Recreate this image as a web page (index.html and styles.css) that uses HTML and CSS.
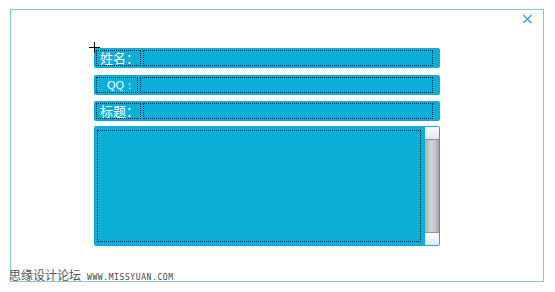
FILE: index.html
```html
<!DOCTYPE html>
<html>
<head>
<meta charset="utf-8">
<link rel="stylesheet" href="styles.css">
</head>
<body>
<div class="frame">
  <span class="close">×</span>
  <form class="form">
    <div class="row r1">
      <span class="label l1">姓名：</span>
      <span class="input"></span>
    </div>
    <div class="row r2">
      <span class="label l2">QQ：</span>
      <span class="input"></span>
    </div>
    <div class="row r3">
      <span class="label l1">标题：</span>
      <span class="input"></span>
    </div>
    <div class="area">
      <div class="area-inner"></div>
      <div class="scroll">
        <div class="sb-btn"></div>
        <div class="sb-thumb"></div>
        <div class="sb-btn"></div>
      </div>
    </div>
  </form>
  <svg class="cursor" width="11" height="11" viewBox="0 0 11 11"><path d="M5.5 0V11M0 5.5H11" stroke="#000" stroke-width="1"/></svg>
</div>
<div class="footer"><span class="cn">思缘设计论坛</span><span class="url">WWW.MISSYUAN.COM</span></div>
</body>
</html>
```
FILE: styles.css
```css
html, body { margin: 0; padding: 0; background: #fff; }
body { font-family: "Noto Sans CJK SC", "Liberation Sans", sans-serif; }
.frame {
  position: relative;
  margin: 9px 0 0 10px;
  width: 532px;
  height: 271px;
  border: 1px solid #88c6d6;
  box-sizing: content-box;
}
.close {
  position: absolute;
  right: 9px;
  top: 0px;
  font-family: "DejaVu Sans", sans-serif;
  font-size: 16px;
  line-height: 18px;
  color: #3ba9c9;
}
.form {
  margin: 0;
  padding: 38px 0 0 83px;
  width: 346px;
}
.row {
  display: flex;
  align-items: stretch;
  height: 20px;
  background: #0aaed7;
  border-radius: 2px;
  padding: 2px 7px 2px 2px;
  box-sizing: border-box;
}
.r2 { margin-top: 7px; }
.r3 { margin-top: 6px; }
.label {
  border: 1px dotted #10283a;
  color: #fff;
  font-size: 13px;
  line-height: 14px;
  padding: 0 1px 0 3px;
  white-space: nowrap;
}
.l1 { width: 39px; }
.l2 { padding-left: 10px; width: 29px; font-family: "Liberation Sans", sans-serif; font-size: 11px; }
.input {
  flex: 1;
  margin-left: 2px;
  border: 1px dotted #10283a;
}
.area {
  margin-top: 5px;
  height: 120px;
  background: #0aaed7;
  border-radius: 2px;
  display: flex;
  padding: 1px 1px 1px 3px;
  box-sizing: border-box;
}
.area-inner {
  flex: 1;
  margin: 3px 4px 3px 0;
  border: 1px dotted #10283a;
}
.scroll {
  width: 14px;
  display: flex;
  flex-direction: column;
  background: #e8eef0;
}
.sb-btn {
  height: 12px;
  background: linear-gradient(#fafcfd, #dfeaee);
}
.sb-thumb {
  flex: 1;
  background: linear-gradient(90deg, #a9aeb1, #cfd3d5 40%, #c4c8ca 70%, #9ea3a6);
  border-top: 1px solid #8e9496;
  border-bottom: 1px solid #8e9496;
}
.cursor {
  position: absolute;
  left: 78px;
  top: 32px;
}
.footer {
  display: flex;
  align-items: baseline;
  margin: -14px 0 0 9px;
  position: relative;
}
.cn { font-size: 12px; color: #555; line-height: 14px; }
.url {
  font-family: "DejaVu Sans Mono", monospace;
  font-size: 8px;
  color: #444;
  margin-left: 6px;
  letter-spacing: 0.6px;
}
```
